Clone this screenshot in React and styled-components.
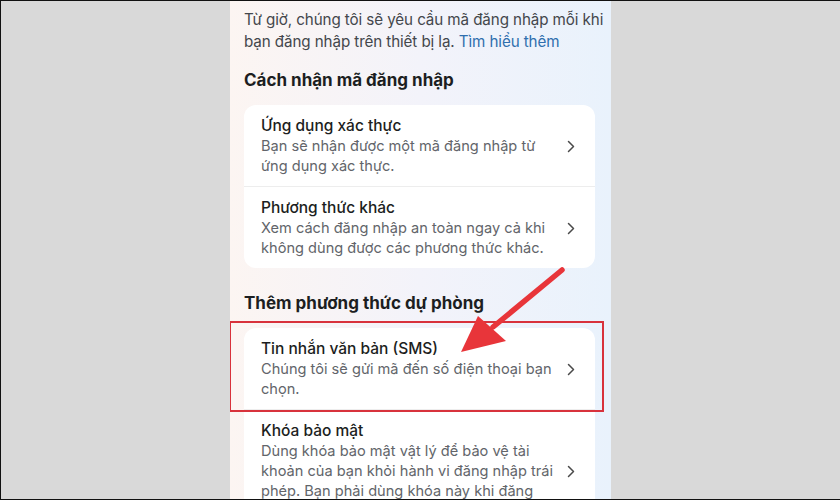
import React from "react";
import styled, { createGlobalStyle } from "styled-components";

const Global = createGlobalStyle`
  html, body { margin: 0; padding: 0; }
  body { font-family: Inter, "Noto Sans", sans-serif; -webkit-font-smoothing: antialiased; }
`;

const Page = styled.div`
  position: relative;
  width: 840px;
  height: 500px;
  box-sizing: border-box;
  background: #d9d9d9;
  border-top: 1px solid #111;
  border-left: 1px solid #111;
  border-bottom: 1px solid #111;
  display: flex;
  justify-content: center;
  overflow: hidden;
`;

const Phone = styled.div`
  width: 381px;
  height: 100%;
  box-sizing: border-box;
  padding: 8px 16px 0 14px;
  background: linear-gradient(90deg, #fcf5f2 0%, #f3f3fa 50%, #e9f2fc 100%);
  display: flex;
  flex-direction: column;
  overflow: hidden;
`;

const Intro = styled.p`
  margin: 0;
  font-size: 15.2px;
  line-height: 22px;
  letter-spacing: -0.1px;
  color: #44474c;
  white-space: nowrap;
`;

const Link = styled.a`
  color: #2f6fae;
  text-decoration: none;
`;

const SectionTitle = styled.h2`
  margin: ${(p) => p.$top}px 0 13px;
  font-size: 17px;
  line-height: 24px;
  font-weight: 700;
  color: #1c1e21;
`;

const Card = styled.div`
  position: relative;
  background: #fff;
  border-radius: 12px;
  display: flex;
  flex-direction: column;
`;

const Row = styled.div`
  display: flex;
  align-items: center;
  gap: 12px;
  padding: 11px 20px 10px 17px;
  & + & { border-top: 1px solid #ededed; }
`;

const RowText = styled.div`
  flex: 1;
  display: flex;
  flex-direction: column;
`;

const RowTitle = styled.div`
  font-size: 15.5px;
  line-height: 20px;
  font-weight: 500;
  color: #1c1e21;
`;

const RowDesc = styled.div`
  font-size: 14.6px;
  line-height: 20px;
  color: #62656a;
`;

const Highlight = styled.div`
  position: absolute;
  left: -15px;
  top: -7px;
  width: 375px;
  height: 91px;
  box-sizing: border-box;
  border: 2.5px solid #d8323c;
  pointer-events: none;
`;

const Arrow = styled.svg`
  position: absolute;
  left: 0;
  top: 0;
  pointer-events: none;
`;

const Chevron = () => (
  <svg width="8" height="13" viewBox="0 0 8 13">
    <path d="M1.5 1.5 L6.5 6.5 L1.5 11.5" fill="none" stroke="#4a4a4a" strokeWidth="1.5" strokeLinecap="round" strokeLinejoin="round" />
  </svg>
);

const Item = ({ title, desc }) => (
  <Row>
    <RowText>
      <RowTitle>{title}</RowTitle>
      <RowDesc>{desc}</RowDesc>
    </RowText>
    <Chevron />
  </Row>
);

export default function App() {
  return (
    <>
      <Global />
      <Page>
        <Phone>
          <Intro>
            Từ giờ, chúng tôi sẽ yêu cầu mã đăng nhập mỗi khi
            <br />
            bạn đăng nhập trên thiết bị lạ. <Link href="#">Tìm hiểu thêm</Link>
          </Intro>
          <SectionTitle $top={15}>Cách nhận mã đăng nhập</SectionTitle>
          <Card>
            <Item title="Ứng dụng xác thực" desc="Bạn sẽ nhận được một mã đăng nhập từ ứng dụng xác thực." />
            <Item title="Phương thức khác" desc="Xem cách đăng nhập an toàn ngay cả khi không dùng được các phương thức khác." />
          </Card>
          <SectionTitle $top={23}>Thêm phương thức dự phòng</SectionTitle>
          <Card>
            <Highlight />
            <Item title="Tin nhắn văn bản (SMS)" desc="Chúng tôi sẽ gửi mã đến số điện thoại bạn chọn." />
            <Item title="Khóa bảo mật" desc="Dùng khóa bảo mật vật lý để bảo vệ tài khoản của bạn khỏi hành vi đăng nhập trái phép. Bạn phải dùng khóa này khi đăng nhập." />
          </Card>
        </Phone>
        <Arrow width="840" height="500" viewBox="0 0 840 500">
          <line x1="561" y1="269" x2="492" y2="326" stroke="#e8353a" strokeWidth="5.5" strokeLinecap="round" />
          <polygon points="460,351 477,315 505,340" fill="#e8353a" />
        </Arrow>
      </Page>
    </>
  );
}
